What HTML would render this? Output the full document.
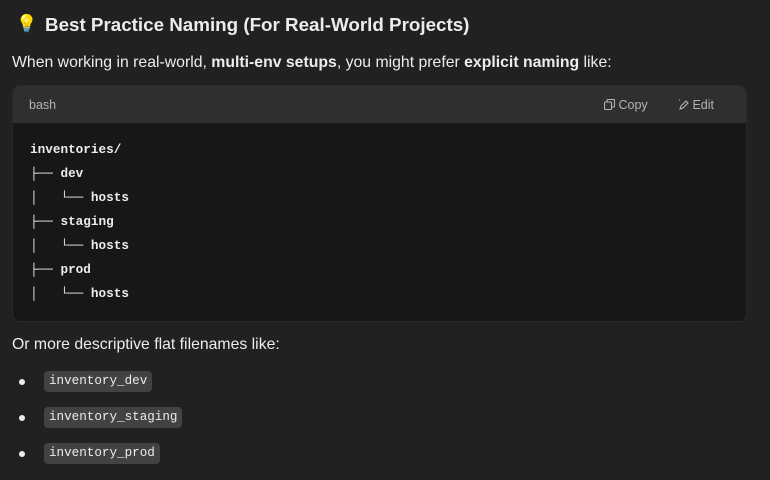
<!DOCTYPE html>
<html><head><meta charset="utf-8"><style>
body{margin:0;background:#212121;color:#ececec;font-family:"Liberation Sans",sans-serif;width:770px;height:480px;overflow:hidden;position:relative}
.a{position:absolute;white-space:nowrap}
h1{font-size:18.8px;font-weight:700;margin:0}
.p{font-size:15.8px}
.cb{position:absolute;left:12px;top:85px;width:735px;height:237px;border-radius:8px;background:#171717;overflow:hidden;border:1px solid #2a2a2a;box-sizing:border-box}
.hd{height:37px;background:#2f2f2f;position:relative;font-size:12.5px;color:#b4b4b4}
pre{margin:0;position:absolute;left:17px;top:52px;font-family:"Liberation Mono",monospace;font-size:12.7px;line-height:24px;font-weight:700;color:#ececec}
.ic{position:absolute;font-family:"Liberation Mono",monospace;font-size:12.6px;line-height:15px;background:#424242;border-radius:4px;padding:3px 5px;left:44px;color:#ececec}
.dot{position:absolute;left:19px;width:6px;height:6px;border-radius:50%;background:#ececec}
</style></head><body>
<div class="a" style="left:16px;top:14px;font-size:17px">💡</div>
<h1 class="a" style="left:45px;top:14px">Best Practice Naming (For Real-World Projects)</h1>
<div class="a p" style="left:12px;top:54px">When working in real-world, <b>multi-env setups</b>, you might prefer <b>explicit naming</b> like:</div>
<div class="cb"><div class="hd">
<span class="a" style="left:16px;top:12px">bash</span>
<span class="a" style="left:591px;top:12px"><svg width="11" height="11" viewBox="0 0 11 11" style="vertical-align:-1px" fill="none" stroke="#b4b4b4" stroke-width="1.1"><rect x="0.5" y="3" width="7" height="7.5" rx="1"/><path d="M3 3V1.5a1 1 0 0 1 1-1h5.5a1 1 0 0 1 1 1V7a1 1 0 0 1-1 1H7.5"/></svg> Copy</span>
<span class="a" style="left:665px;top:12px"><svg width="11" height="11" viewBox="0 0 11 11" style="vertical-align:-1px" fill="none" stroke="#b4b4b4" stroke-width="1.1"><path d="M2 10l1-3 5-5 2 2-5 5z M1 1l1 0"/></svg> Edit</span>
</div>
<pre>inventories/
├── dev
│   └── hosts
├── staging
│   └── hosts
├── prod
│   └── hosts</pre></div>
<div class="a p" style="left:12px;top:336px">Or more descriptive flat filenames like:</div>
<div class="dot" style="top:379px"></div><span class="ic" style="top:371px">inventory_dev</span>
<div class="dot" style="top:415px"></div><span class="ic" style="top:407px">inventory_staging</span>
<div class="dot" style="top:451px"></div><span class="ic" style="top:443px">inventory_prod</span>
</body></html>
